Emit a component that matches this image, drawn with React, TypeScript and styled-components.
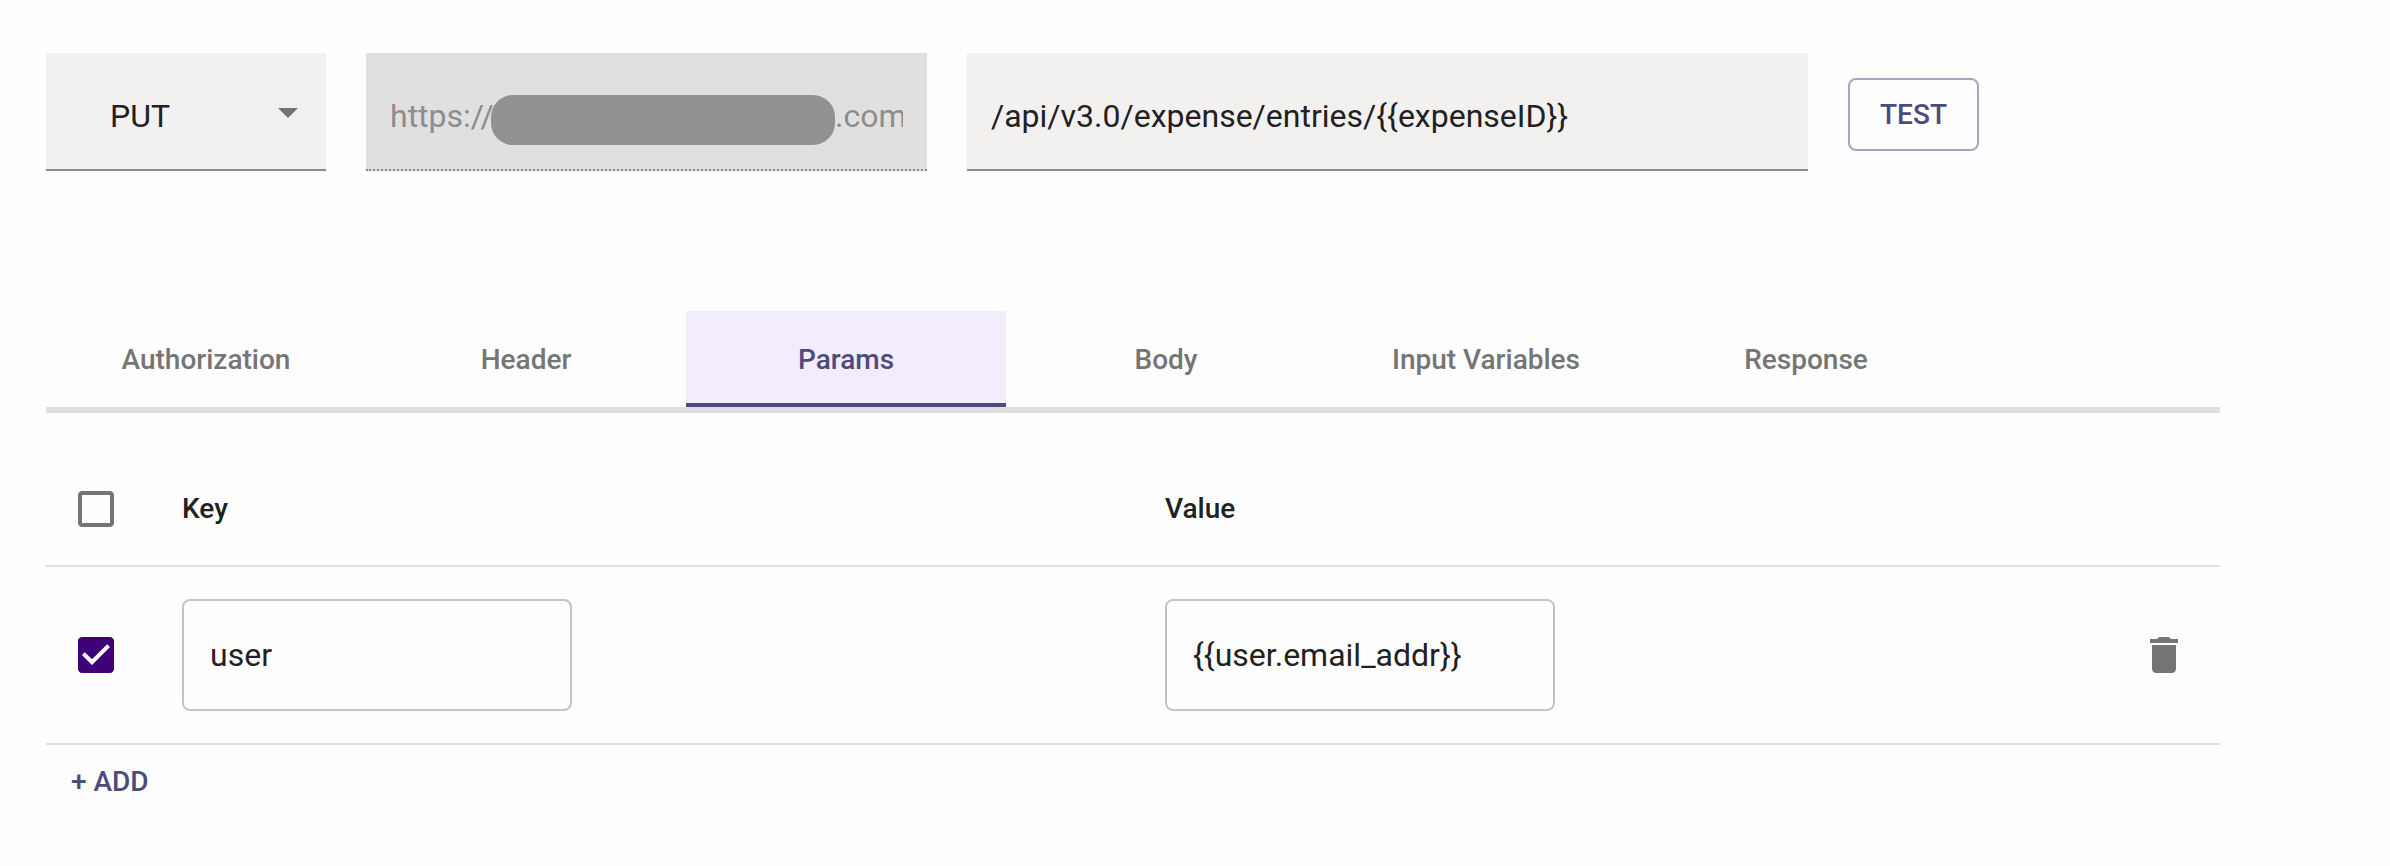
import React, { useState } from 'react';
import styled, { createGlobalStyle, css } from 'styled-components';

const GlobalStyle = createGlobalStyle`
  *, *::before, *::after { box-sizing: border-box; }
  body {
    margin: 0;
    background: #fefefe;
    color: rgba(0, 0, 0, 0.87);
    font-family: Roboto, "Liberation Sans", sans-serif;
    -webkit-font-smoothing: antialiased;
  }
  button, input { font-family: inherit; }
`;

const Page = styled.main`
  width: 2390px;
  min-height: 866px;
  padding: 53px 170px 0 46px;
`;

const RequestBar = styled.div`
  display: flex;
  align-items: flex-start;
  gap: 40px;
`;

const fieldText = css`
  font-size: 32px;
  line-height: 38px;
`;

const FilledField = styled.div<{ $width: number; $disabled?: boolean }>`
  position: relative;
  display: flex;
  width: ${(p) => p.$width}px;
  height: 118px;
  padding: 44px 24px 0;
  background: ${(p) => (p.$disabled ? '#e0e0e0' : '#f3f1f0')};
  border-bottom: 2px ${(p) => (p.$disabled ? 'dotted #868686' : 'solid #8c8c8c')};
  color: ${(p) => (p.$disabled ? '#8d8d8d' : '#212121')};
  ${fieldText}
`;

const MethodField = styled(FilledField)`
  padding: 44px 14px 0 64px;
  justify-content: space-between;
`;

const SelectArrow = styled.svg`
  width: 48px;
  height: 48px;
  margin-top: -9px;
  fill: #727272;
`;

const HostSuffix = styled.span`
  flex: 0 0 68px;
  margin-left: auto;
  overflow: hidden;
  white-space: nowrap;
`;

const Redaction = styled.span`
  position: absolute;
  top: 42px;
  left: 125px;
  width: 344px;
  height: 50px;
  border-radius: 22px;
  background: #919191;
`;

const PlainInput = styled.input`
  width: 100%;
  height: 38px;
  padding: 0;
  border: 0;
  outline: 0;
  background: none;
  color: #212121;
  ${fieldText}
`;

const TextButton = styled.button`
  border: 0;
  background: none;
  color: #4e4b7c;
  font-size: 28px;
  font-weight: 500;
  line-height: 48px;
  padding: 0;
`;

const TestButton = styled(TextButton)`
  width: 131px;
  height: 73px;
  margin-top: 25px;
  border: 2px solid #a6a4be;
  border-radius: 8px;
`;

const TabList = styled.div`
  display: flex;
  margin-top: 140px;
  border-bottom: 6px solid #e0e0e0;
`;

const Tab = styled.button<{ $active: boolean }>`
  width: 320px;
  height: 96px;
  padding: 6px 0 0;
  border: 0;
  border-bottom: 4px solid ${(p) => (p.$active ? '#4e4b7c' : 'transparent')};
  background: ${(p) => (p.$active ? '#f3ecfd' : 'transparent')};
  color: ${(p) => (p.$active ? '#4e4b7c' : '#757575')};
  font-size: 28px;
  font-weight: 500;
  line-height: 40px;
`;

const Row = styled.div<{ $height: number }>`
  display: grid;
  grid-template-columns: 136px 983px 1fr 80px;
  align-items: center;
  height: ${(p) => p.$height}px;
  border-bottom: 2px solid #e0e0e0;
`;

const Table = styled.section`
  padding-top: 39px;
`;

const HeadCell = styled.span`
  color: #212121;
  font-size: 28px;
  font-weight: 500;
`;

const IconButton = styled.button<{ $inset?: boolean }>`
  display: block;
  width: 48px;
  height: 48px;
  margin-left: ${(p) => (p.$inset ? '26px' : '0')};
  padding: 0;
  border: 0;
  background: none;
`;

const Icon = styled.svg<{ $color: string }>`
  display: block;
  width: 48px;
  height: 48px;
  fill: ${(p) => p.$color};
`;

const OutlinedField = styled.label`
  display: flex;
  align-items: center;
  width: 390px;
  height: 112px;
  padding: 0 26px;
  border: 2px solid #c4c4c4;
  border-radius: 8px;
`;

const AddButton = styled(TextButton)`
  display: block;
  margin: 13px 0 0 25px;
`;

function Checkbox({ checked, onToggle }: { checked: boolean; onToggle: () => void }) {
  return (
    <IconButton $inset role="checkbox" aria-checked={checked} onClick={onToggle}>
      <Icon viewBox="0 0 24 24" $color={checked ? '#400078' : '#757575'}>
        {checked ? (
          <path d="M19 3H5c-1.11 0-2 .9-2 2v14c0 1.1.89 2 2 2h14c1.11 0 2-.9 2-2V5c0-1.1-.89-2-2-2zm-9 14l-5-5 1.41-1.41L10 14.17l7.59-7.59L19 8l-9 9z" />
        ) : (
          <path d="M19 5v14H5V5h14m0-2H5c-1.1 0-2 .9-2 2v14c0 1.1.9 2 2 2h14c1.1 0 2-.9 2-2V5c0-1.1-.9-2-2-2z" />
        )}
      </Icon>
    </IconButton>
  );
}

const tabs = ['Authorization', 'Header', 'Params', 'Body', 'Input Variables', 'Response'];

export default function App() {
  const [activeTab, setActiveTab] = useState('Params');
  const [allSelected, setAllSelected] = useState(false);
  const [selected, setSelected] = useState(true);

  return (
    <>
      <GlobalStyle />
      <Page>
        <RequestBar>
          <MethodField $width={280}>
            <span>PUT</span>
            <SelectArrow viewBox="0 0 24 24">
              <path d="M7 10l5 5 5-5z" />
            </SelectArrow>
          </MethodField>
          <FilledField $width={561} $disabled>
            <span>https://</span>
            <Redaction />
            <HostSuffix>.com</HostSuffix>
          </FilledField>
          <FilledField $width={841}>
            <PlainInput aria-label="Path" defaultValue="/api/v3.0/expense/entries/{{expenseID}}" />
          </FilledField>
          <TestButton>TEST</TestButton>
        </RequestBar>

        <TabList role="tablist">
          {tabs.map((tab) => (
            <Tab key={tab} role="tab" $active={tab === activeTab} onClick={() => setActiveTab(tab)}>
              {tab}
            </Tab>
          ))}
        </TabList>

        <Table>
          <Row $height={115}>
            <Checkbox checked={allSelected} onToggle={() => setAllSelected(!allSelected)} />
            <HeadCell>Key</HeadCell>
            <HeadCell>Value</HeadCell>
          </Row>
          <Row $height={178}>
            <Checkbox checked={selected} onToggle={() => setSelected(!selected)} />
            <OutlinedField>
              <PlainInput aria-label="Key" defaultValue="user" />
            </OutlinedField>
            <OutlinedField>
              <PlainInput aria-label="Value" defaultValue="{{user.email_addr}}" />
            </OutlinedField>
            <IconButton aria-label="Delete">
              <Icon viewBox="0 0 24 24" $color="#757575">
                <path d="M6 19c0 1.1.9 2 2 2h8c1.1 0 2-.9 2-2V7H6v12zM19 4h-3.5l-1-1h-5l-1 1H5v2h14V4z" />
              </Icon>
            </IconButton>
          </Row>
          <AddButton>+ ADD</AddButton>
        </Table>
      </Page>
    </>
  );
}
